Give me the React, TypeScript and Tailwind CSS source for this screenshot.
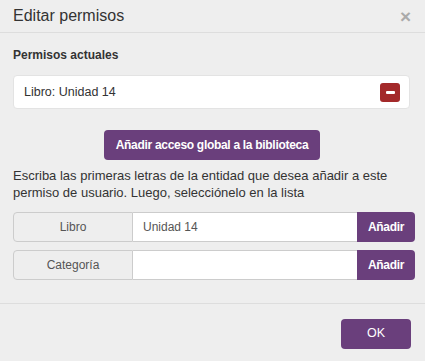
import { useState } from 'react';

const purple = 'bg-[#6a3f7c] text-white hover:bg-[#5a3369]';

function AddRow({ label, initial }: { label: string; initial: string }) {
  const [value, setValue] = useState(initial);
  return (
    <div className="flex h-[30px] text-[12px]">
      <span className="w-[120px] shrink-0 flex items-center justify-center bg-[#eeeeee] text-[#555] border border-[#cccccc] rounded-l-[4px]">
        {label}
      </span>
      <input
        value={value}
        onChange={(e) => setValue(e.target.value)}
        className="flex-1 min-w-0 bg-white border-y border-[#cccccc] px-[10px] text-[#555] outline-none"
      />
      <button className={`w-[58px] shrink-0 text-[12px] font-bold tracking-[-0.3px] rounded-r-[4px] ${purple}`}>
        Añadir
      </button>
    </div>
  );
}

export default function App() {
  return (
    <div className="w-[425px] h-[361px] bg-[#eeeeee] text-[#333] font-['Liberation_Sans',Arial,sans-serif] flex flex-col">
      <div className="h-[33px] flex items-center justify-between pl-[13px] pr-[14px] border-b border-[#dddddd]">
        <h4 className="text-[16px]">Editar permisos</h4>
        <button className="text-[#aaaaaa] text-[19px] font-bold leading-none">×</button>
      </div>

      <div className="flex-1 pl-[13px] pr-[10px] pt-[14px]">
        <h5 className="text-[12px] font-bold leading-[16px]">Permisos actuales</h5>

        <ul className="mt-[12px] mr-[5px]">
          <li className="h-[34px] bg-white border border-[#e3e3e3] rounded-[4px] flex items-center justify-between pl-[10px] pr-[9px] text-[12.5px]">
            <span>Libro: Unidad 14</span>
            <button className="w-[20px] h-[19px] rounded-[3px] bg-[#a3292a] flex items-center justify-center">
              <span className="block w-[9px] h-[3px] bg-white rounded-[1px]" />
            </button>
          </li>
        </ul>

        <div className="flex justify-center mt-[21px] pr-[4px]">
          <button className={`h-[30px] px-[12px] rounded-[4px] text-[12px] font-bold tracking-[-0.3px] ${purple}`}>
            Añadir acceso global a la biblioteca
          </button>
        </div>

        <p className="mt-[7px] text-[13px] leading-[17px]">
          Escriba las primeras letras de la entidad que desea añadir a este permiso de usuario. Luego, selecciónelo en la lista
        </p>

        <div className="mt-[11px] flex flex-col gap-[8px]">
          <AddRow label="Libro" initial="Unidad 14" />
          <AddRow label="Categoría" initial="" />
        </div>
      </div>

      <div className="h-[58px] border-t border-[#dddddd] flex items-center justify-end pr-[14px] pt-[2px]">
        <button className={`w-[70px] h-[30px] rounded-[4px] text-[12.5px] ${purple}`}>OK</button>
      </div>
    </div>
  );
}
